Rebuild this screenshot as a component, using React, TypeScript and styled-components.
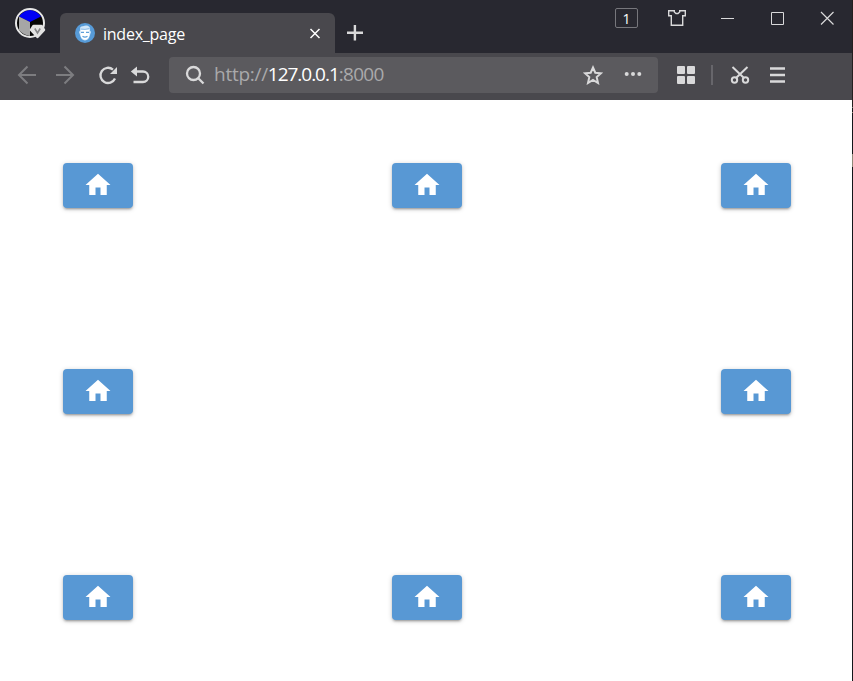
import React from "react";
import styled, { createGlobalStyle } from "styled-components";

const GlobalStyle = createGlobalStyle`
  *, *::before, *::after { box-sizing: border-box; }
  html, body { margin: 0; padding: 0; overflow: hidden; }
`;

const Window = styled.div`
  display: flex;
  flex-direction: column;
  width: 853px;
  height: 681px;
  padding-right: 1px;
  background: linear-gradient(
    #241f1f 0 107px, #77736e 107px 108px, #14161a 108px 112px, #8b7d6b 112px 113px,
    #14161a 113px 154px, #8f8877 154px 167px, #14161a 167px
  );
  font-family: "Open Sans", "Noto Sans", sans-serif;
  overflow: hidden;
`;

const TitleBar = styled.header`
  display: flex;
  height: 53px;
  flex: none;
  background: #282830;
`;

const Avatar = styled.div`
  width: 60px;
  padding: 8px 0 0 14px;
`;

const Tab = styled.div`
  display: flex;
  align-items: center;
  width: 275px;
  height: 40px;
  margin-top: 13px;
  padding: 0 14px 0 15px;
  border-radius: 6px 6px 0 0;
  background: #49484d;
  color: #fff;
`;

const TabTitle = styled.span`
  flex: 1;
  margin-left: 8px;
  padding-top: 1px;
  font-size: 16px;
  line-height: 22px;
  letter-spacing: -0.25px;
`;

const NewTab = styled.div`
  padding: 24px 0 0 11px;
`;

const WindowControls = styled.div`
  display: flex;
  height: 36px;
  margin-left: auto;
  padding-right: 13px;
  gap: 26px;
  align-items: center;
`;

const TabCount = styled.div`
  width: 23px;
  height: 20px;
  margin-right: 1px;
  border: 1px solid #77777c;
  border-radius: 2px;
  color: #fff;
  font-size: 14px;
  line-height: 19px;
  text-align: center;
`;

const Toolbar = styled.nav`
  display: flex;
  align-items: center;
  height: 47px;
  flex: none;
  padding: 0 0 3px 17px;
  background: #49484d;
`;

const IconSlot = styled.span<{ $left?: number; $color?: string }>`
  display: flex;
  flex: none;
  margin-left: ${(p) => p.$left ?? 0}px;
  color: ${(p) => p.$color ?? "#d9d9da"};
`;

const AddressBar = styled.div`
  display: flex;
  align-items: center;
  width: 489px;
  height: 36px;
  margin-left: 19px;
  padding: 0 15px 0 16px;
  border-radius: 4px;
  background: #5b5a5e;
`;

const Address = styled.span`
  flex: 1;
  margin-left: 9px;
  margin-top: -2px;
  font-size: 19px;
  line-height: 26px;
  letter-spacing: -0.7px;
  color: #a9a9ab;
  white-space: nowrap;
`;

const Scheme = styled.span`
  letter-spacing: -0.27px;
`;

const Host = styled.span`
  color: #fff;
  letter-spacing: -1.03px;
`;

const Divider = styled.span`
  width: 2px;
  height: 20px;
  margin-left: 15px;
  background: #67666b;
`;

const Page = styled.main`
  display: grid;
  flex: 1;
  grid-template-columns: repeat(3, 70px);
  grid-template-rows: repeat(3, 45px);
  justify-content: space-between;
  align-content: space-between;
  padding: 63px 61px 61px 63px;
  background: #fff;
`;

const HomeButton = styled.button<{ $column: number; $row: number }>`
  display: flex;
  grid-column: ${(p) => p.$column};
  grid-row: ${(p) => p.$row};
  align-items: center;
  justify-content: center;
  padding: 0 1px 2px 0;
  border: 0;
  border-radius: 4px;
  background: #5898d4;
  color: #fff;
  box-shadow: 0 1px 5px rgba(0, 0, 0, 0.2), 0 2px 2px rgba(0, 0, 0, 0.14), 0 3px 1px -2px rgba(0, 0, 0, 0.12);
`;

type IconProps = { children: React.ReactNode; size?: number; weight?: number };

const Icon = ({ children, size = 20, weight = 2 }: IconProps) => (
  <svg width={size} height={size} viewBox={`0 0 ${size} ${size}`} fill="none" stroke="currentColor" strokeWidth={weight}>
    {children}
  </svg>
);

const AvatarIcon = () => (
  <svg width="32" height="32" viewBox="0 0 32 32">
    <circle cx="16" cy="15" r="14" fill="#050505" />
    <path d="M5 8.500Q10 2 16 2t11 6.500L16 14z" fill="#0000f5" />
    <path d="M5 8.500L16 14v14Q9 27 5 22z" fill="#a6a6a6" />
    <circle cx="16" cy="15" r="14" fill="none" stroke="#e8e8e8" strokeWidth="2" />
    <path d="M19.500 18h8l2.500 4-6.500 7-6.500-7z" fill="#e2e2e2" stroke="#e2e2e2" strokeWidth="2.500" strokeLinejoin="round" />
    <path d="M20.800 20.500l2.700 4.500 2.700-4.500" fill="none" stroke="#858587" strokeWidth="1.600" />
  </svg>
);

const FaceIcon = () => (
  <svg width="20" height="20" viewBox="0 0 20 20">
    <circle cx="10" cy="10" r="10" fill="#579bd8" />
    <path d="M5 6Q5 3 8 3.300 12 1.500 14.500 4q1 1 .5 3.500l1 1.500-1 3q-1 5-5 5.500Q6 17 5 12L4 9l1-1.500z" fill="#cfe6fa" />
    <path d="M6 6.800h8l.5 5q-.8 4.700-4.500 5-3.700-.3-4.500-5z" fill="#fff" />
    <path d="M5.500 6Q10 7 14.500 5.500" fill="none" stroke="#8dbde8" strokeWidth="1" />
    <path d="M6 9.300h3M11 9.300h3M7.500 13.300q2.500 1.600 5 0" fill="none" stroke="#5d9fda" strokeWidth="1.200" />
  </svg>
);

const buttonCells = [
  [1, 1], [2, 1], [3, 1],
  [1, 2], [3, 2],
  [1, 3], [2, 3], [3, 3],
];

export default function App() {
  return (
    <>
      <GlobalStyle />
      <Window>
        <TitleBar>
          <Avatar><AvatarIcon /></Avatar>
          <Tab>
            <FaceIcon />
            <TabTitle>index_page</TabTitle>
            <Icon size={12} weight={1.5}><path d="M1.500 2l9 9M10.500 2l-9 9" /></Icon>
          </Tab>
          <NewTab>
            <IconSlot><Icon size={18} weight={2.4}><path d="M8.900 1v15.500M1 8.700h16" /></Icon></IconSlot>
          </NewTab>
          <WindowControls>
            <TabCount>1</TabCount>
            <IconSlot>
              <Icon size={24} weight={1.4}>
                <path d="M3.700 4.700H9.300V6l1.700 1.500h2L14.700 6V4.700H20.300V9.700H17.700V19.300H6.300V9.700H3.700z" />
              </Icon>
            </IconSlot>
            <IconSlot><Icon size={24} weight={1}><path d="M6 12.500h13" /></Icon></IconSlot>
            <IconSlot><Icon size={24} weight={1}><path d="M6.500 6.500h12v12h-12z" /></Icon></IconSlot>
            <IconSlot><Icon size={24} weight={1.2}><path d="M6 6l12.500 12.500M18.500 6L6 18.500" /></Icon></IconSlot>
          </WindowControls>
        </TitleBar>
        <Toolbar>
          <IconSlot $color="#7d7d80"><Icon><path d="M19 10H2.500M10.500 1.500L2 10l8.500 8.500" /></Icon></IconSlot>
          <IconSlot $left={18} $color="#7d7d80"><Icon><path d="M1 10h16.500M9.500 1.500L18 10l-8.500 8.500" /></Icon></IconSlot>
          <IconSlot $left={23}>
            <Icon weight={2.3}>
              <path d="M15 4.600A7.600 7.600 0 1 0 17 13.500" />
              <path d="M19 2v7h-7z" fill="currentColor" stroke="none" />
            </Icon>
          </IconSlot>
          <IconSlot $left={12}>
            <Icon weight={2.3}>
              <path d="M5 6.500h8a4.900 4.900 0 0 1 0 10.500H3.500" />
              <path d="M.800 6.500L7 1.500v10z" fill="currentColor" stroke="none" />
            </Icon>
          </IconSlot>
          <AddressBar>
            <IconSlot><Icon weight={2.3}><circle cx="8.500" cy="8.500" r="6.500" /><path d="M13 13l5.500 5.500" /></Icon></IconSlot>
            <Address><Scheme>http://</Scheme><Host>127.0.0.1</Host>:8000</Address>
            <IconSlot>
              <Icon><path d="M10 2.500l2.300 5.200 5.700.6-4.300 3.800 1.300 5.900-5-3-5 3 1.300-5.900L2 8.300l5.700-.6z" /></Icon>
            </IconSlot>
            <IconSlot $left={20}>
              <Icon>
                <g fill="currentColor" stroke="none">
                  <circle cx="3.700" cy="9" r="2" /><circle cx="10" cy="9" r="2" /><circle cx="16.300" cy="9" r="2" />
                </g>
              </Icon>
            </IconSlot>
          </AddressBar>
          <IconSlot $left={18}>
            <Icon>
              <g fill="currentColor" stroke="none">
                <rect x="1" y="1" width="8" height="8" rx="1" /><rect x="11" y="1" width="8" height="8" rx="1" />
                <rect x="1" y="11" width="8" height="8" rx="1" /><rect x="11" y="11" width="8" height="8" rx="1" />
              </g>
            </Icon>
          </IconSlot>
          <Divider />
          <IconSlot $left={17}>
            <Icon>
              <path d="M2.500 2l11.500 11M17.500 2L6 13" />
              <circle cx="4.500" cy="15" r="2.700" /><circle cx="15.500" cy="15" r="2.700" />
            </Icon>
          </IconSlot>
          <IconSlot $left={18}>
            <Icon weight={2.4}><path d="M2 3.500h15M2 10h15M2 16.500h15" /></Icon>
          </IconSlot>
        </Toolbar>
        <Page>
          {buttonCells.map(([column, row]) => (
            <HomeButton key={`${column}-${row}`} $column={column} $row={row} aria-label="Home">
              <svg width="30" height="30" viewBox="0 0 24 24" fill="currentColor">
                <path d="M10 20v-6h4v6h5v-8h3L12 3 2 12h3v8z" />
              </svg>
            </HomeButton>
          ))}
        </Page>
      </Window>
    </>
  );
}
